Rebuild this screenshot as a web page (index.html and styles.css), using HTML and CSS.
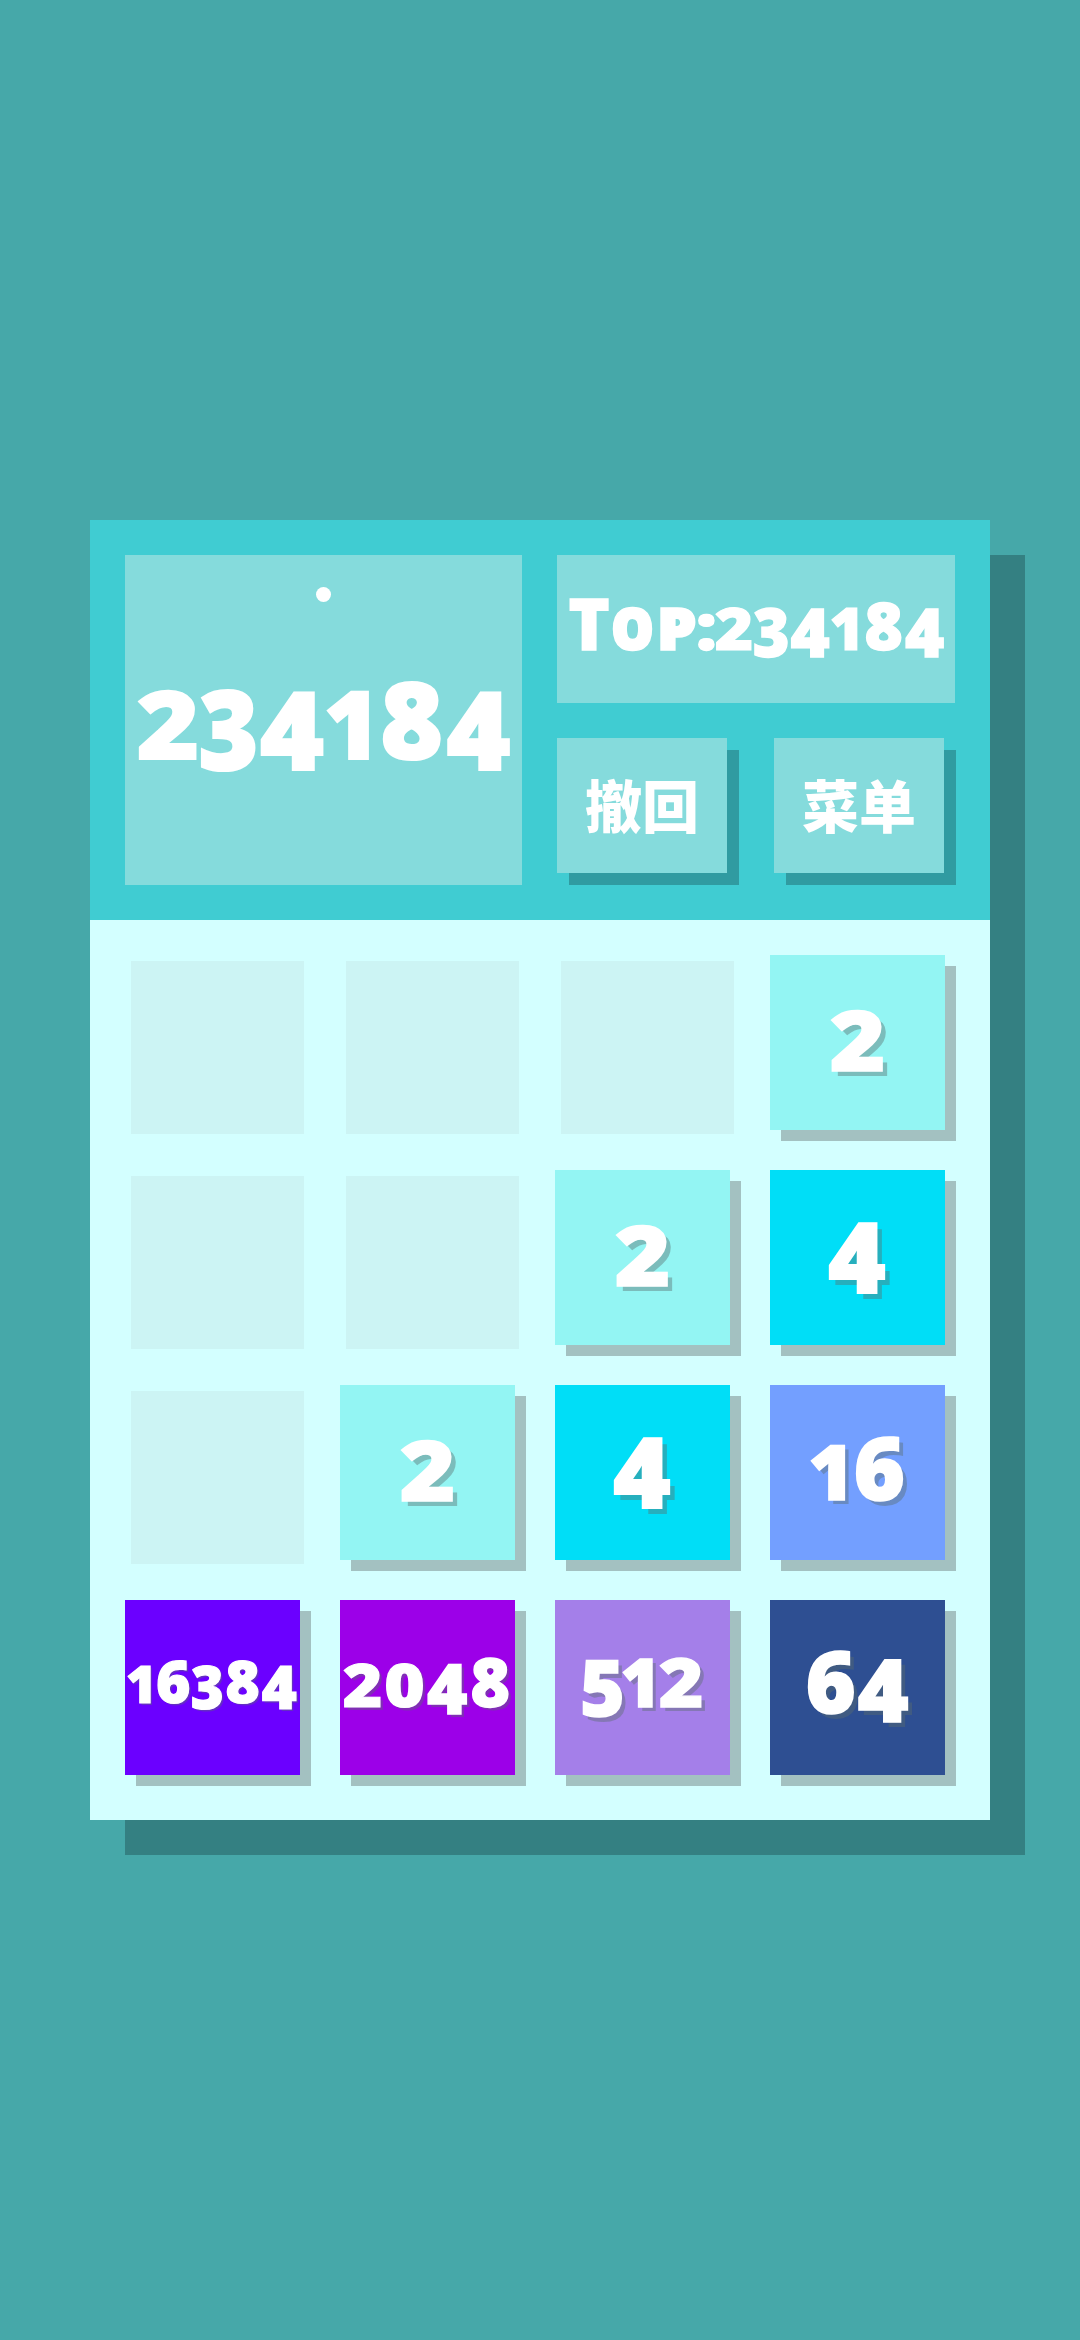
FILE: index.html
```
<!DOCTYPE html>
<html lang="zh-CN">
<head>
<meta charset="utf-8">
<title>2048</title>
<link rel="stylesheet" href="styles.css">
</head>
<body>
<main class="panel">
  <header class="header">
    <section class="score">
      <span class="dot"></span>
      <div class="num"><b class="d2">2</b><b class="d3">3</b><b class="d4">4</b><b class="d1">1</b><b class="d8">8</b><b class="d4">4</b></div>
    </section>
    <div class="side">
      <section class="top">
        <div class="num"><b class="lt">T</b><b class="lo">o</b><b class="lp">p</b><b class="colon">:</b><b class="d2">2</b><b class="d3">3</b><b class="d4">4</b><b class="d1">1</b><b class="d8">8</b><b class="d4">4</b></div>
      </section>
      <div class="buttons">
        <button class="button">撤回</button>
        <button class="button">菜单</button>
      </div>
    </div>
  </header>
  <section class="board">
    <div class="cell"></div>
    <div class="cell"></div>
    <div class="cell"></div>
    <div class="tile v2"><div class="num"><b class="d2">2</b></div></div>

    <div class="cell"></div>
    <div class="cell"></div>
    <div class="tile v2"><div class="num"><b class="d2">2</b></div></div>
    <div class="tile v4"><div class="num"><b class="d4">4</b></div></div>

    <div class="cell"></div>
    <div class="tile v2"><div class="num"><b class="d2">2</b></div></div>
    <div class="tile v4"><div class="num"><b class="d4">4</b></div></div>
    <div class="tile v16"><div class="num"><b class="d1">1</b><b class="d6">6</b></div></div>

    <div class="tile v16384"><div class="num"><b class="d1">1</b><b class="d6">6</b><b class="d3">3</b><b class="d8">8</b><b class="d4">4</b></div></div>
    <div class="tile v2048"><div class="num"><b class="d2">2</b><b class="d0">0</b><b class="d4">4</b><b class="d8">8</b></div></div>
    <div class="tile v512"><div class="num"><b class="d5">5</b><b class="d1">1</b><b class="d2">2</b></div></div>
    <div class="tile v64"><div class="num"><b class="d6">6</b><b class="d4">4</b></div></div>
  </section>
</main>
</body>
</html>
```
FILE: styles.css
```
* { box-sizing: border-box; }
body {
  margin: 0;
  min-height: 2340px;
  padding: 520px 90px;
  background: #46a8a9;
  color: #fff;
  font-family: "Noto Sans", "Noto Sans CJK SC", sans-serif;
}
.panel {
  width: 900px;
  height: 1300px;
  background: #d3ffff;
  box-shadow: 35px 35px 0 #348082;
}
.header {
  display: flex;
  gap: 35px;
  height: 400px;
  padding: 35px;
  background: #40ccd2;
}
.score {
  display: flex;
  flex-direction: column;
  align-items: center;
  width: 397px;
  background: #85dbdc;
}
.dot {
  width: 15px;
  height: 15px;
  margin-top: 32px;
  border-radius: 50%;
  background: #fff;
}
.score .num { margin: 60px 0 0 3px; font-size: 109px; }
.side {
  display: flex;
  flex-direction: column;
  gap: 35px;
  width: 398px;
}
.top {
  display: flex;
  justify-content: center;
  height: 148px;
  padding: 36px 0 0 2px;
  background: #85dbdc;
}
.top .num { font-size: 67px; }
.buttons { display: flex; gap: 47px; }
.button {
  width: 170px;
  height: 135px;
  padding: 0 0 5px;
  border: 0;
  background: #85dbdc;
  box-shadow: 12px 12px 0 #309ba1;
  color: #fff;
  font: 900 57px/126px "Noto Sans CJK SC", sans-serif;
}

/* Board */
.board {
  display: grid;
  grid-template-columns: repeat(4, 175px);
  grid-auto-rows: 175px;
  gap: 40px;
  padding: 35px;
}
.cell {
  width: 173px;
  height: 173px;
  margin: 6px;
  background: #ccf4f4;
}
.tile {
  display: flex;
  justify-content: center;
  box-shadow: 11px 11px 0 #a3c1c1;
  text-shadow: .055em .055em 0 rgba(90, 110, 110, .42);
}
.v2 { padding-top: 30px; background: #93f5f3; font-size: 97px; }
.v4 { padding-top: 26px; background: #00def7; font-size: 98px; }
.v16 { padding-top: 36px; background: #739fff; font-size: 89px; }
.v64 { padding-top: 36px; background: #2e4f92; font-size: 87px; }
.v512 { padding-top: 38px; background: #a47fe9; font-size: 78px; }
.v2048 { padding-top: 46px; background: #9c00e8; font-size: 69px; text-shadow: 3px 3px 0 rgba(90, 110, 110, .42); }
.v16384 { padding-top: 50px; background: #6b00ff; font-size: 60px; text-shadow: 2px 2px 0 rgba(90, 110, 110, .42); }

/* Numerals: each glyph sits in its own slot, raised or lowered from the baseline */
.num {
  display: flex;
  justify-content: center;
  font-weight: 900;
  font-variant-numeric: proportional-nums;
  line-height: 1;
  white-space: nowrap;
}
.num b {
  display: flex;
  justify-content: center;
  height: 1em;
  font-weight: 900;
  -webkit-text-stroke: .02em #fff;
  transform-origin: 50% .888em;
}
.d0 { width: .63em; transform: scale(1, .87); }
.num .d1 { width: .4em; margin-right: .07em; transform: translateX(.055em) scale(.88, .86); }
.d2 { width: .57em; transform: scale(.98, .86); }
.d3 { width: .545em; transform: translateY(.105em) scale(.94, 1.01); }
.d4 { width: .62em; transform: translateY(.105em); }
.d5 { width: .52em; transform: translateY(.12em) scale(.98, 1); }
.d6 { width: .6em; transform: scale(.98, .98); }
.d8 { width: .62em; transform: scale(.98, .98); }
.lt { width: .63em; transform: scale(1.04, 1.06); }
.lo { width: .67em; font-variant-caps: small-caps; transform: scale(.96, 1.05); }
.lp { width: .64em; font-variant-caps: small-caps; transform: scale(1.08, 1.05); }
.colon { width: .25em; transform: scale(1.1, .95); }
```
